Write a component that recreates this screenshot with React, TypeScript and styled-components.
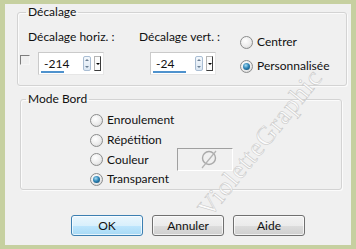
import React from "react";
import styled, { createGlobalStyle } from "styled-components";

const Global = createGlobalStyle`
  html, body { margin: 0; padding: 0; background: #c6d0a0; }
  body { font-family: Lato, "Noto Sans", sans-serif; font-size: 12px; color: #111; }
  * { box-sizing: border-box; }
`;

const Frame = styled.div`
  position: relative;
  width: 356px;
  height: 249px;
  border-style: solid;
  border-color: #c6d0a0;
  border-width: 4px 5px 4px 5px;
  background: #f0f0f0;
  overflow: hidden;
  display: flex;
  flex-direction: column;
`;

const Group = styled.fieldset<{ $ml: number; $mr: number; $mt: number }>`
  margin: ${(p) => p.$mt}px ${(p) => p.$mr}px 0 ${(p) => p.$ml}px;
  padding: 0;
  border: 1px solid #d3d3d3;
  border-radius: 3px;
  box-shadow: inset 1px 1px 0 #fbfbfb, 1px 1px 0 #fbfbfb;
  min-width: 0;
`;

const Legend = styled.legend<{ $ml: number }>`
  margin-left: ${(p) => p.$ml}px;
  padding: 0 2px;
  line-height: 16px;
  font-size: 12px;
`;

const OffsetBody = styled.div`
  display: flex;
  padding: 9px 0 7px 0;
`;

const LeftBlock = styled.div`
  width: 222px;
  display: flex;
  flex-direction: column;
`;

const LabelsRow = styled.div`
  display: flex;
  padding-left: 10px;
  line-height: 16px;
  white-space: nowrap;
`;

const FieldLabel = styled.span<{ $w?: number }>`
  width: ${(p) => (p.$w ? `${p.$w}px` : "auto")};
`;

const InputsRow = styled.div`
  display: flex;
  align-items: flex-start;
  margin-top: 7px;
  padding-left: 2px;
`;

const Check = styled.span`
  width: 10px;
  height: 10px;
  margin-top: 3px;
  margin-right: 8px;
  border-style: solid;
  border-width: 1px;
  border-color: #7d7d7d #f6f6f6 #f6f6f6 #7d7d7d;
  flex: none;
`;

const Spin = styled.div<{ $ml?: number }>`
  position: relative;
  width: 66px;
  height: 23px;
  margin-left: ${(p) => p.$ml ?? 0}px;
  display: flex;
  align-items: center;
  background: #fff;
  border: 1px solid;
  border-color: #cacaca #e6e6e6 #e6e6e6 #cacaca;
  padding-left: 5px;
  flex: none;
`;

const SpinValue = styled.span`
  flex: 1;
  line-height: 16px;
`;

const UpDown = styled.span`
  width: 8px;
  height: 15px;
  margin-right: 3px;
  border: 1px solid #a9bdd3;
  border-radius: 2px;
  background: linear-gradient(#f4f8fc, #dbe7f3);
  display: flex;
  flex-direction: column;
  align-items: center;
  justify-content: space-around;
  flex: none;
`;

const Tri = styled.span<{ $down?: boolean; $c?: string; $w?: number }>`
  width: 0;
  height: 0;
  border-left: ${(p) => p.$w ?? 2}px solid transparent;
  border-right: ${(p) => p.$w ?? 2}px solid transparent;
  ${(p) =>
    p.$down
      ? `border-top: ${p.$w ?? 2}px solid ${p.$c ?? "#6b7f93"};`
      : `border-bottom: ${p.$w ?? 2}px solid ${p.$c ?? "#6b7f93"};`}
`;

const Drop = styled.span`
  width: 7px;
  height: 15px;
  margin-right: 2px;
  border: 1px solid;
  border-color: #b5b5b5 #3c3c3c #3c3c3c #b5b5b5;
  background: #fbfbfb;
  display: flex;
  align-items: center;
  justify-content: center;
  flex: none;
`;

const Bar = styled.span`
  position: absolute;
  left: 2px;
  bottom: 1px;
  height: 2px;
  background: #4f92cd;
`;

const RightBlock = styled.div`
  display: flex;
  flex-direction: column;
  margin-top: 1px;
`;

const RadioRow = styled.div<{ $h: number }>`
  display: flex;
  align-items: center;
  height: ${(p) => p.$h}px;
  white-space: nowrap;
`;

const RadioDot = styled.span<{ $on?: boolean }>`
  width: 13px;
  height: 13px;
  margin-right: 4px;
  border-radius: 50%;
  flex: none;
  border: 1px solid #8b8c8c;
  background: radial-gradient(circle at 40% 35%, #ffffff 0%, #ececec 55%, #cdcdcd 100%);
  display: flex;
  align-items: center;
  justify-content: center;
  &::after {
    content: "";
    width: 7px;
    height: 7px;
    border-radius: 50%;
    display: ${(p) => (p.$on ? "block" : "none")};
    background: radial-gradient(circle at 40% 35%, #a8dcf2 0%, #2f86b8 45%, #0b3c5e 100%);
  }
`;

const RadioLabel = styled.span<{ $w?: number }>`
  width: ${(p) => (p.$w ? `${p.$w}px` : "auto")};
  line-height: 16px;
`;

const ModeBody = styled.div`
  padding: 3px 0 0 69px;
  display: flex;
  flex-direction: column;
`;

const Swatch = styled.span`
  width: 56px;
  height: 23px;
  border: 1px solid;
  border-color: #a0a0a0 #ffffff #ffffff #a0a0a0;
  background: #f0f0f0;
  flex: none;
`;

const Buttons = styled.div`
  display: flex;
  gap: 9px;
  margin-top: 25px;
  padding-left: 66px;
`;

const Button = styled.button<{ $primary?: boolean }>`
  width: 72px;
  height: 21px;
  padding: 0;
  font-family: inherit;
  font-size: 12px;
  color: #111;
  border-radius: 3px;
  border: 1px solid ${(p) => (p.$primary ? "#3c7fb1" : "#707070")};
  background: ${(p) =>
    p.$primary
      ? "linear-gradient(#eaf6fd 0%, #d9f0fc 50%, #bee6fd 51%, #a7d9f5 100%)"
      : "linear-gradient(#f2f2f2 0%, #ebebeb 50%, #dddddd 51%, #cfcfcf 100%)"};
  box-shadow: inset 0 0 0 1px rgba(255, 255, 255, 0.7);
`;

const Watermark = styled.div`
  position: absolute;
  left: 165px;
  top: 124px;
  font-family: "Liberation Serif", serif;
  font-size: 26px;
  letter-spacing: 1px;
  color: #fbfbfb;
  -webkit-text-stroke: 0.5px #c4c4c4;
  transform: rotate(-51deg);
  transform-origin: center;
  white-space: nowrap;
  pointer-events: none;
`;

const WaterLogo = styled.svg`
  position: absolute;
  left: 195px;
  top: 144px;
  pointer-events: none;
`;

export default function App() {
  return (
    <>
      <Global />
      <Frame>
        <Group $ml={12} $mr={4} $mt={0}>
          <Legend $ml={8}>Décalage</Legend>
          <OffsetBody>
            <LeftBlock>
              <LabelsRow>
                <FieldLabel $w={111}>Décalage horiz. :</FieldLabel>
                <FieldLabel>Décalage vert. :</FieldLabel>
              </LabelsRow>
              <InputsRow>
                <Check />
                <Spin>
                  <SpinValue>-214</SpinValue>
                  <UpDown>
                    <Tri />
                    <Tri $down />
                  </UpDown>
                  <Drop>
                    <Tri $down $c="#000" />
                  </Drop>
                  <Bar style={{ width: 23 }} />
                </Spin>
                <Spin $ml={46}>
                  <SpinValue>-24</SpinValue>
                  <UpDown>
                    <Tri />
                    <Tri $down />
                  </UpDown>
                  <Drop>
                    <Tri $down $c="#000" />
                  </Drop>
                  <Bar style={{ width: 33 }} />
                </Spin>
              </InputsRow>
            </LeftBlock>
            <RightBlock>
              <RadioRow $h={24}>
                <RadioDot />
                <RadioLabel>Centrer</RadioLabel>
              </RadioRow>
              <RadioRow $h={24}>
                <RadioDot $on />
                <RadioLabel>Personnalisée</RadioLabel>
              </RadioRow>
            </RightBlock>
          </OffsetBody>
        </Group>

        <Group $ml={15} $mr={9} $mt={5}>
          <Legend $ml={5}>Mode Bord</Legend>
          <ModeBody>
            <RadioRow $h={20}>
              <RadioDot />
              <RadioLabel $w={70}>Enroulement</RadioLabel>
            </RadioRow>
            <RadioRow $h={20}>
              <RadioDot />
              <RadioLabel $w={70}>Répétition</RadioLabel>
            </RadioRow>
            <RadioRow $h={19}>
              <RadioDot />
              <RadioLabel $w={70}>Couleur</RadioLabel>
              <Swatch />
            </RadioRow>
            <RadioRow $h={20}>
              <RadioDot $on />
              <RadioLabel $w={70}>Transparent</RadioLabel>
            </RadioRow>
          </ModeBody>
        </Group>

        <Buttons>
          <Button $primary>OK</Button>
          <Button>Annuler</Button>
          <Button>Aide</Button>
        </Buttons>

        <Watermark>VioletteGraphic</Watermark>
        <WaterLogo width="20" height="24" viewBox="0 0 20 24">
          <circle cx="9" cy="10" r="6.5" fill="none" stroke="#a9a9a9" strokeWidth="1.4" />
          <path d="M2 20 L16 3" stroke="#b3b3b3" strokeWidth="1.2" fill="none" />
        </WaterLogo>
      </Frame>
    </>
  );
}
